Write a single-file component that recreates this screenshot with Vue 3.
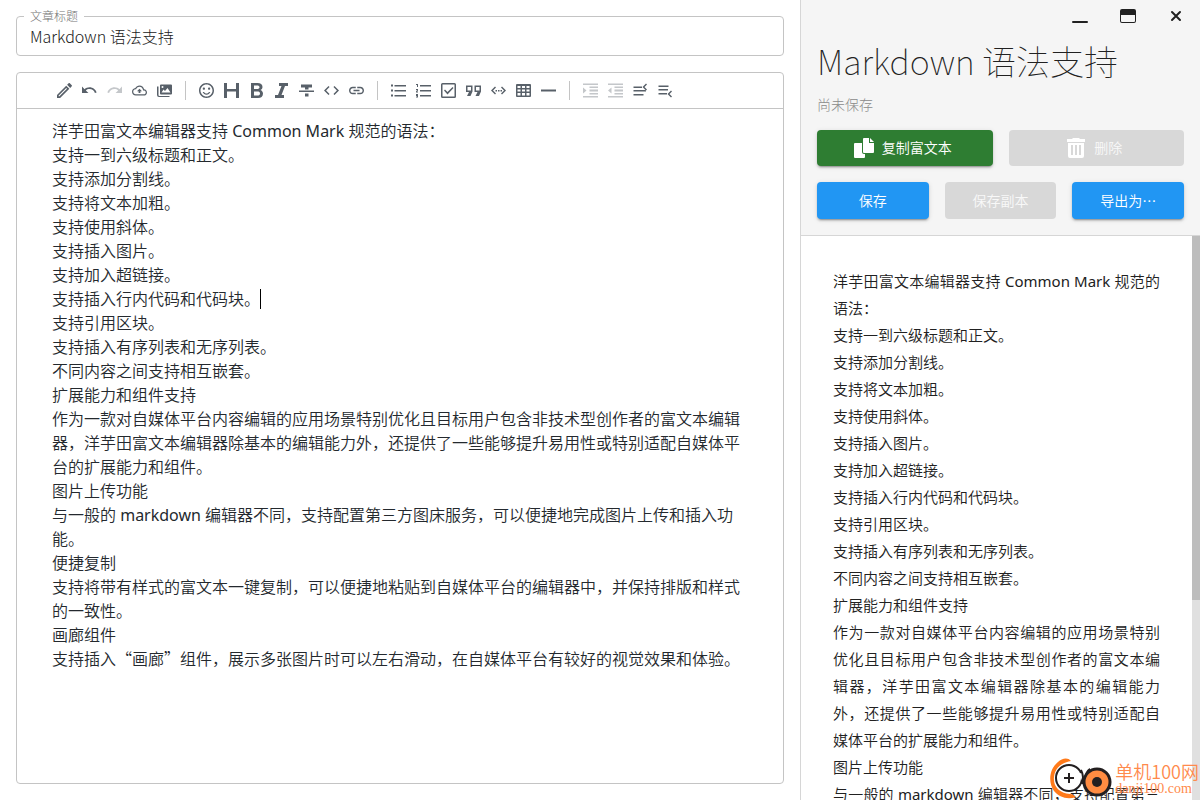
<script setup>
import { ref } from 'vue'

const title = ref('Markdown 语法支持')

const lines = [
  '洋芋田富文本编辑器支持 Common Mark 规范的语法：',
  '支持一到六级标题和正文。',
  '支持添加分割线。',
  '支持将文本加粗。',
  '支持使用斜体。',
  '支持插入图片。',
  '支持加入超链接。',
  '支持插入行内代码和代码块。',
  '支持引用区块。',
  '支持插入有序列表和无序列表。',
  '不同内容之间支持相互嵌套。',
  '扩展能力和组件支持',
  '作为一款对自媒体平台内容编辑的应用场景特别优化且目标用户包含非技术型创作者的富文本编辑器，洋芋田富文本编辑器除基本的编辑能力外，还提供了一些能够提升易用性或特别适配自媒体平台的扩展能力和组件。',
  '图片上传功能',
  '与一般的 markdown 编辑器不同，支持配置第三方图床服务，可以便捷地完成图片上传和插入功能。',
  '便捷复制',
  '支持将带有样式的富文本一键复制，可以便捷地粘贴到自媒体平台的编辑器中，并保持排版和样式的一致性。',
  '画廊组件',
  '支持插入“画廊”组件，展示多张图片时可以左右滑动，在自媒体平台有较好的视觉效果和体验。',
]
const caretLine = 7

// Curly quotes take the full-width form of the Chinese face; Latin words take a regular weight.
const pieces = (text) => text.split(/([“”]|[A-Za-z ]+)/).filter(Boolean)
const kind = (s) => (s === '“' || s === '”' ? 'quote' : /[A-Za-z]/.test(s) ? 'latin' : '')

const groups = [
  [
    { name: '编辑', box: '3 3 18 18', d: 'M14.06 9.02l.92.92L5.92 19H5v-.92l9.06-9.06M17.66 3c-.25 0-.51.1-.7.29l-1.83 1.83 3.75 3.75 1.83-1.83c.39-.39.39-1.02 0-1.41l-2.34-2.34c-.2-.2-.45-.29-.71-.29zm-3.6 3.19L3 17.25V21h3.75L17.81 9.94l-3.75-3.75z' },
    { name: '撤销', box: '2 2 21 21', d: 'M12.5 8c-2.65 0-5.05.99-6.9 2.6L2 7v9h9l-3.62-3.62c1.39-1.16 3.16-1.88 5.12-1.88 3.54 0 6.55 2.31 7.6 5.5l2.37-.78C21.08 11.03 17.15 8 12.5 8z' },
    { name: '重做', off: true, box: '1 2 21 21', d: 'M18.4 10.6C16.55 8.99 14.15 8 11.5 8c-4.65 0-8.58 3.03-9.96 7.22L3.9 16c1.05-3.19 4.05-5.5 7.6-5.5 1.95 0 3.73.72 5.12 1.88L13 16h9V7l-3.6 3.6z' },
    { name: '上传', box: '0 0 24 24', d: 'M19.35 10.04C18.67 6.59 15.64 4 12 4 9.11 4 6.6 5.64 5.35 8.04 2.34 8.36 0 10.91 0 14c0 3.31 2.69 6 6 6h13c2.76 0 5-2.24 5-5 0-2.64-2.05-4.78-4.65-4.96zM19 18H6c-2.21 0-4-1.79-4-4 0-2.05 1.53-3.76 3.56-3.97l1.07-.11.5-.95C8.08 7.14 9.94 6 12 6c2.62 0 4.88 1.86 5.39 4.43l.3 1.5 1.53.11c1.56.1 2.78 1.41 2.78 2.96 0 1.65-1.35 3-3 3zM8 13h2.55v3h2.9v-3H16l-4-4z' },
    { name: '画廊', box: '0 0 30 30', d: 'M8 3h20a2 2 0 0 1 2 2v16a2 2 0 0 1-2 2H8a2 2 0 0 1-2-2V5a2 2 0 0 1 2-2zm1 16h18l-6-9-5 6-3-3zM11 6a2 2 0 1 0 0 4 2 2 0 0 0 0-4zM0 7h3v17a2 2 0 0 0 2 2h20v2H4a4 4 0 0 1-4-4z' },
  ],
  [
    { name: '表情', box: '2 2 20 20', d: 'M11.99 2C6.47 2 2 6.48 2 12s4.47 10 9.99 10C17.52 22 22 17.52 22 12S17.52 2 11.99 2zM12 20c-4.42 0-8-3.58-8-8s3.58-8 8-8 8 3.58 8 8-3.58 8-8 8zm3.5-9c.83 0 1.5-.67 1.5-1.5S16.33 8 15.5 8 14 8.67 14 9.5s.67 1.5 1.5 1.5zm-7 0c.83 0 1.5-.67 1.5-1.5S9.33 8 8.5 8 7 8.67 7 9.5 7.67 11 8.5 11zm3.5 6.5c2.33 0 4.31-1.46 5.11-3.5h-1.7c-.68 1.19-1.94 2-3.41 2s-2.73-.81-3.41-2h-1.7c.8 2.04 2.78 3.5 5.11 3.5z' },
    { name: '标题', box: '0 0 30 30', d: 'M0 0h6v12h18V0h6v30h-6V17H6v13H0z' },
    { name: '加粗', box: '0 0 30 30', d: 'M4 0h13c6 0 10 3 10 8 0 3-2 5-4 6 3 1 5 4 5 7 0 6-4 9-10 9H4zM10 5v7h6c3 0 5-1 5-3.500s-2-3.500-5-3.500zM10 17v8h7c3 0 5-1 5-4s-2-4-5-4z' },
    { name: '斜体', box: '0 0 30 30', d: 'M10 0h18v6h-6l-7 18h5v6H2v-6h6l7-18h-5z' },
    { name: '删除线', box: '0 0 30 30', d: 'M4 3h22v6h-7v4h-7V9H4zM0 15h30v3H0zM12 21h7v6h-7z' },
    { name: '行内代码', box: '2 2 20 20', d: 'M9.400 16.600L4.800 12l4.600-4.600L8 6l-6 6 6 6 1.400-1.400zm5.200 0l4.600-4.600-4.600-4.600L16 6l6 6-6 6-1.400-1.400z' },
    { name: '链接', box: '2 2 20 20', d: 'M3.9 12c0-1.71 1.39-3.1 3.1-3.1h4V7H7c-2.76 0-5 2.24-5 5s2.24 5 5 5h4v-1.9H7c-1.71 0-3.1-1.39-3.1-3.1zM8 13h8v-2H8v2zm9-6h-4v1.900h4c1.710 0 3.100 1.390 3.100 3.100s-1.390 3.100-3.100 3.100h-4V17h4c2.760 0 5-2.240 5-5s-2.240-5-5-5z' },
  ],
  [
    { name: '无序列表', box: '0 0 30 30', d: 'M0 3h4v4H0zM7 4h23v3H7zM0 13h4v4H0zM7 14h23v3H7zM0 23h4v4H0zM7 24h23v3H7z' },
    { name: '有序列表', box: '0 0 30 30', d: 'M0 2h4v6H2V4H0zM8 4h22v3H8zM0 12h4v3l-2 2h2v2H0v-2l2-3H0zM8 14h22v3H8zM0 22h4v7H0v-2h2v-1H0zM8 24h22v3H8z' },
    { name: '任务列表', box: '0 0 30 30', d: 'M3 0h24a3 3 0 0 1 3 3v24a3 3 0 0 1-3 3H3a3 3 0 0 1-3-3V3a3 3 0 0 1 3-3zM3 3v24h24V3zM8 13l5 5 10-10 2 2-12 13-7-8z' },
    { name: '引用', box: '0 0 30 30', d: 'M0 5h13v12l-4 9H2l4-8H0zm3 3v7h7V8zM17 5h13v12l-4 9h-7l4-8h-6zm3 3v7h7V8z' },
    { name: '代码块', box: '0 0 30 30', d: 'M8 7l2 2-6 6 6 6-2 2-8-8zM22 7l8 8-8 8-2-2 6-6-6-6zM9 14h3v3H9zM14 14h3v3h-3zM19 14h3v3h-3z' },
    { name: '表格', box: '0 0 30 30', d: 'M2 2h26a2 2 0 0 1 2 2v22a2 2 0 0 1-2 2H2a2 2 0 0 1-2-2V4a2 2 0 0 1 2-2zM3 6v4h6V6zm9 0v4h6V6zm9 0v4h6V6zM3 13v4h6v-4zm9 0v4h6v-4zm9 0v4h6v-4zM3 20v5h6v-5zm9 0v5h6v-5zm9 0v5h6v-5z' },
    { name: '分割线', box: '0 0 30 30', d: 'M0 13h30v4H0z' },
  ],
  [
    { name: '增加缩进', off: true, box: '0 0 30 30', d: 'M0 1h30v3H0zM13 7h17v3H13zM13 13h17v4H13zM13 20h17v3H13zM0 26h30v3H0zM0 9l7 6-7 6z' },
    { name: '减少缩进', off: true, box: '0 0 30 30', d: 'M0 1h30v3H0zM13 7h17v3H13zM13 13h17v4H13zM13 20h17v3H13zM0 26h30v3H0zM7 9v12l-7-6z' },
    { name: '上方插入行', box: '0 0 30 30', d: 'M1 7h17v3H1zM1 14h25v3H1zM1 22h20v3H1zM26 1l2 2-5 5 5 5-2 2-7-7z' },
    { name: '下方插入行', box: '0 0 30 30', d: 'M1 5h20v3H1zM1 12h19v3H1zM1 20h17v3H1zM26 15l2 2-5 5 5 5-2 2-7-7z' },
  ],
]
</script>

<template>
  <div class="app">
    <main class="writer">
      <fieldset class="field">
        <legend><label for="title">文章标题</label></legend>
        <input id="title" v-model="title" type="text" />
      </fieldset>

      <section class="editor">
        <div class="toolbar" role="toolbar" aria-label="编辑工具">
          <div v-for="(group, g) in groups" :key="g" class="group">
            <button
              v-for="tool in group"
              :key="tool.name"
              type="button"
              class="tool"
              :aria-label="tool.name"
              :disabled="tool.off"
            >
              <svg :viewBox="tool.box" aria-hidden="true"><path :d="tool.d" fill-rule="evenodd" /></svg>
            </button>
          </div>
        </div>
        <div class="document" contenteditable="true" role="textbox" aria-multiline="true" aria-label="正文" spellcheck="false">
          <p v-for="(line, i) in lines" :key="i"><span v-for="(piece, k) in pieces(line)" :key="k" :class="kind(piece)">{{ piece }}</span><span v-if="i === caretLine" class="caret"></span></p>
        </div>
      </section>
    </main>

    <aside class="side">
      <header class="head">
        <div class="window">
          <button type="button" aria-label="最小化">
            <svg viewBox="0 0 16 16" aria-hidden="true"><rect y="13" width="16" height="2" rx="1" /></svg>
          </button>
          <button type="button" aria-label="最大化">
            <svg viewBox="0 0 16 16" aria-hidden="true"><path fill-rule="evenodd" d="M2 1h12a2 2 0 0 1 2 2v10a2 2 0 0 1-2 2H2a2 2 0 0 1-2-2V3a2 2 0 0 1 2-2zM1 7v6a1 1 0 0 0 1 1h12a1 1 0 0 0 1-1V7z" /></svg>
          </button>
          <button type="button" aria-label="关闭">
            <svg viewBox="0 0 16 16" aria-hidden="true"><path class="cross" d="M4 4l8 8M12 4l-8 8" /></svg>
          </button>
        </div>
        <h1>{{ title }}</h1>
        <p class="status">尚未保存</p>
        <div class="actions">
          <button type="button" class="btn pair green">
            <svg viewBox="0 0 20 20" aria-hidden="true"><path d="M10 0h5v5h5v9a1 1 0 0 1-1 1h-9a1 1 0 0 1-1-1V1a1 1 0 0 1 1-1zM16 0l4 4h-4zM1 5h7v9a2 2 0 0 0 2 2h1v3a1 1 0 0 1-1 1H1a1 1 0 0 1-1-1V6a1 1 0 0 1 1-1z" /></svg>
            <span>复制富文本</span>
          </button>
          <button type="button" class="btn pair" disabled>
            <svg viewBox="0 0 20 20" aria-hidden="true"><path fill-rule="evenodd" d="M7 0h6l1 1h5v3H1V1h5zM2 5h16v13a2 2 0 0 1-2 2H4a2 2 0 0 1-2-2zM5 7v10h2V7zM9 7v10h2V7zM13 7v10h2V7z" /></svg>
            <span>删除</span>
          </button>
        </div>
        <div class="actions">
          <button type="button" class="btn blue"><span>保存</span></button>
          <button type="button" class="btn" disabled><span>保存副本</span></button>
          <button type="button" class="btn blue"><span>导出为…</span></button>
        </div>
      </header>

      <div class="preview">
        <article>
          <p v-for="(line, i) in lines" :key="i"><span v-for="(piece, k) in pieces(line)" :key="k" :class="kind(piece)">{{ piece }}</span></p>
        </article>
        <div class="track" aria-hidden="true"><div class="thumb"></div></div>
      </div>
    </aside>

    <div class="mark">
      <svg viewBox="0 0 64 42" aria-hidden="true">
        <path class="swoosh" d="M21 3C18-1 12 0 8 4-1 11-2 25 4 33c5 6 13 9 22 6-2-2-4-3-6-3C9 35 3 28 4 19 5 10 11 5 21 3z" />
        <circle class="lens" cx="19" cy="20" r="13" />
        <path class="gap" d="M31 15l3 7" />
        <path class="ink" d="M19 15v10M14 20h10M31 12c2 4 3 8 1 14M40 11c-2 1-3 3-4 5" />
        <circle class="orb" cx="47" cy="24" r="13" />
        <circle class="pupil" cx="47" cy="24" r="5" />
      </svg>
      <div class="words">
        <span class="name">单机100网</span>
        <span class="site">danji100.com</span>
      </div>
    </div>
  </div>
</template>

<style>
body {
  overflow: hidden;
}
</style>

<style scoped>
.app {
  position: relative;
  display: grid;
  grid-template-columns: 2fr 1fr;
  height: 100vh;
  overflow: hidden;
  background: #fff;
  color: #212121;
  font-family: "Noto Sans CJK SC", sans-serif;
  font-weight: 300;
}
button,
input {
  font: inherit;
  color: inherit;
}
p,
h1 {
  margin: 0;
}
.writer {
  display: flex;
  flex-direction: column;
  gap: 16px;
  min-width: 0;
  padding: 10px 16px 16px;
}
.field {
  margin: 0;
  padding: 0 13px;
  height: 46px;
  box-sizing: border-box;
  min-width: 0;
  border: 1px solid #c4c4c4;
  border-radius: 4px;
}
.field legend {
  margin-left: -6px;
  padding: 0 6px;
  color: #757575;
  font-size: 12px;
  line-height: 12px;
}
.field input {
  display: block;
  width: 100%;
  height: 32px;
  padding: 0 0 5px;
  box-sizing: border-box;
  border: 0;
  outline: 0;
  background: none;
  font-size: 16px;
}
.editor {
  display: flex;
  flex: 1;
  flex-direction: column;
  min-height: 0;
  border: 1px solid #c4c4c4;
  border-radius: 4px;
}
.toolbar {
  display: flex;
  padding: 5px 35px;
  border-bottom: 1px solid #c4c4c4;
}
.group {
  display: flex;
  align-items: center;
}
.group + .group::before {
  content: "";
  width: 1px;
  height: 19px;
  margin: 0 8px;
  background: #c4c4c4;
}
.tool {
  display: flex;
  padding: 5px;
  border: 0;
  background: none;
  color: #586069;
}
.tool svg {
  width: 15px;
  height: 15px;
  fill: currentColor;
}
.tool:disabled {
  opacity: 0.35;
}
.document {
  flex: 1;
  min-height: 0;
  padding: 10px 35px;
  overflow: hidden;
  outline: 0;
  color: #24292e;
  font-family: "Noto Sans", "Noto Sans CJK SC", sans-serif;
  font-weight: 350;
  font-size: 16px;
  line-height: 24px;
}
.quote {
  font-family: "Noto Sans CJK SC", sans-serif;
  line-height: 1;
}
.latin {
  font-weight: 400;
}
.caret {
  display: inline-block;
  width: 1px;
  height: 20px;
  vertical-align: -4px;
  background: #000;
}
.side {
  display: flex;
  flex-direction: column;
  min-width: 0;
  min-height: 0;
  border-left: 1px solid #d6d6d6;
}
.head {
  display: flex;
  flex-direction: column;
  padding: 0 16px 16px;
  border-bottom: 1px solid #d6d6d6;
  background: #f5f5f5;
}
.window {
  display: flex;
  justify-content: flex-end;
  gap: 32px;
  height: 32px;
  align-items: center;
}
.window button {
  display: flex;
  padding: 0;
  border: 0;
  background: none;
}
.window svg {
  width: 16px;
  height: 16px;
  fill: #212121;
}
.cross {
  stroke: #212121;
  stroke-width: 2;
  stroke-linecap: round;
}
h1 {
  padding-top: 7px;
  font-size: 34px;
  font-weight: 100;
  line-height: 44px;
}
.status {
  padding: 10px 0 15px;
  color: #8a8a8a;
  font-size: 14px;
  line-height: 22px;
}
.actions {
  display: flex;
  gap: 16px;
}
.actions + .actions {
  margin-top: 16px;
}
.btn {
  display: flex;
  flex: 1;
  align-items: center;
  justify-content: center;
  gap: 8px;
  height: 37px;
  padding: 0;
  border: 0;
  border-radius: 4px;
  background: #d8d8d8;
  color: #f8f8f8;
  font-size: 14px;
  font-weight: 350;
}
.btn span {
  padding-bottom: 2px;
}
.btn.pair {
  height: 36px;
  padding-right: 4px;
}
.btn svg {
  width: 20px;
  height: 20px;
  fill: #fff;
}
.btn.green,
.btn.blue {
  color: #fff;
  box-shadow: 0 3px 1px -2px rgba(0, 0, 0, 0.2), 0 2px 2px rgba(0, 0, 0, 0.14), 0 1px 5px rgba(0, 0, 0, 0.12);
}
.btn.green {
  background: #2e7d32;
}
.btn.blue {
  background: #2196f3;
}
.preview {
  display: flex;
  flex: 1;
  min-height: 0;
}
article {
  flex: 1;
  min-width: 0;
  padding: 32px;
  overflow-y: auto;
  scrollbar-width: none;
  color: #212121;
  font-family: "Noto Sans", "Noto Sans CJK SC", sans-serif;
  font-weight: 350;
  font-size: 15px;
  line-height: 27px;
  text-align: justify;
}
.track {
  width: 8px;
  background: #e0e0e0;
}
.thumb {
  height: 64.5%;
  background: #bdbdbd;
}
.mark {
  position: absolute;
  right: 1px;
  bottom: 0;
  display: flex;
  align-items: center;
  gap: 1px;
  color: #ff8a4c;
}
.mark svg {
  width: 64px;
  height: 42px;
}
.swoosh {
  fill: #ff7a1a;
}
.lens {
  fill: #fff;
  stroke: #231f20;
  stroke-width: 2;
}
.gap {
  stroke: #fff;
  stroke-width: 4;
}
.ink {
  fill: none;
  stroke: #231f20;
  stroke-width: 2;
}
.orb {
  fill: #ff8c42;
  stroke: #231f20;
  stroke-width: 3;
}
.pupil {
  fill: #231f20;
}
.words {
  display: flex;
  flex-direction: column;
}
.name {
  font-size: 18px;
  font-weight: 350;
  line-height: 20px;
}
.site {
  font-family: "Liberation Serif", serif;
  font-size: 14px;
  font-weight: 400;
  line-height: 16px;
}
</style>
